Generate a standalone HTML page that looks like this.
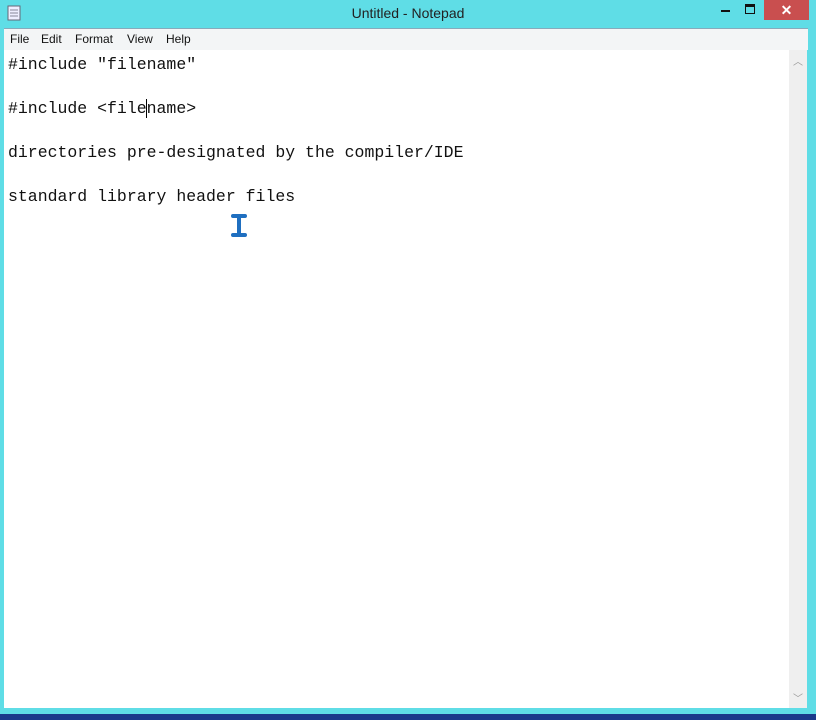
<!DOCTYPE html>
<html><head><style>
body{margin:0;width:816px;height:720px;background:#5fdde6;position:relative;overflow:hidden;font-family:"Liberation Sans",sans-serif}
.title{position:absolute;top:5px;left:0;width:816px;text-align:center;font-size:14px;color:#222}
.close{position:absolute;left:764px;top:0;width:45px;height:20px;background:#c94f4f;color:#fff;text-align:center;font-size:14px;line-height:20px;font-weight:bold}
.menu{position:absolute;left:4px;top:28px;width:804px;height:21px;background:#f3f5f6;border-top:1px solid #8ab}
.menu span{position:absolute;top:3px;font-size:12px;color:#111}
.edit{position:absolute;left:4px;top:50px;width:785px;height:658px;background:#fff}
.sb{position:absolute;left:789px;top:50px;width:18px;height:658px;background:#efefef}
pre{margin:0;position:absolute;left:8px;top:54px;font-family:"Liberation Mono",monospace;font-size:16.5px;line-height:22px;color:#111}
.task{position:absolute;left:0;top:714px;width:816px;height:6px;background:#1a3a8a}
</style></head><body>
<svg style="position:absolute;left:7px;top:5px" width="14" height="16"><rect x="1" y="1" width="12" height="14" fill="#eef" stroke="#667"/><path d="M3 5h8M3 8h8M3 11h8" stroke="#889"/></svg>
<div class="title">Untitled - Notepad</div>
<div style="position:absolute;left:721px;top:10px;width:9px;height:2px;background:#111"></div>
<div style="position:absolute;left:745px;top:4px;width:8px;height:6px;border:1.5px solid #111;border-top-width:3px"></div>
<div class="close">✕</div>
<div class="menu"><span style="left:6px">File</span><span style="left:37px">Edit</span><span style="left:71px">Format</span><span style="left:123px">View</span><span style="left:162px">Help</span></div>
<div class="edit"></div>
<div class="sb"><div style="position:absolute;top:3px;left:4px;font-size:10px;color:#999">︿</div><div style="position:absolute;bottom:3px;left:4px;font-size:10px;color:#999">﹀</div></div>
<pre>#include "filename"

#include &lt;file<span style="border-left:1px solid #000;margin-left:-1px"></span>name&gt;

directories pre-designated by the compiler/IDE

standard library header files</pre>
<svg style="position:absolute;left:229px;top:213px" width="20" height="26"><path d="M4 3h12M10 3v19M4 22h12" stroke="#fff" stroke-width="7" stroke-linecap="round"/><path d="M4 3h12M10 3v19M4 22h12" stroke="#1f6fc0" stroke-width="4" stroke-linecap="round"/></svg>
<div class="task"></div>
</body></html>
